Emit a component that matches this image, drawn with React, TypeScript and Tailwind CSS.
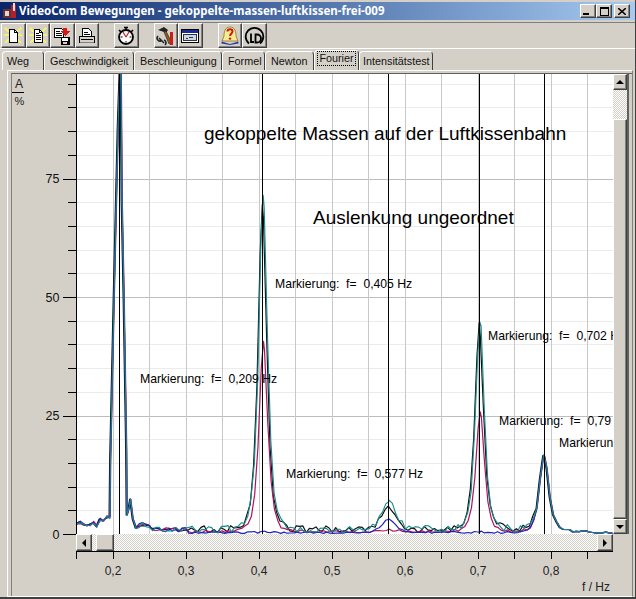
import type { ReactNode } from "react";

const W = 537;
const H = 460;
const px = (f: number) => (f - 0.15) * 730 + 1;
const py = (p: number) => H - p * 4.74;

const noiseA = (i: number) => Math.abs(Math.sin(i * 12.9898 + 4.1) * 43758.5453) % 1;
const noiseB = (i: number) => Math.abs(Math.sin(i * 78.233 + 1.7) * 24634.6345) % 1;

const bump = (f: number, c: number, h: number, w = 0.0107) => h / (1 + ((f - c) / w) ** 2) ** 2;

type Trace = { color: string; width: number; seed: number; p405: number; p577: number; p702: number; quiet: boolean; dx: number };

const traces: Trace[] = [
  { color: "#111111", width: 1.2, seed: 3, p405: 68, p577: 5.4, p702: 43, quiet: false, dx: -0.8 },
  { color: "#b01060", width: 1.2, seed: 11, p405: 40, p577: 0.5, p702: 25, quiet: false, dx: 0.3 },
  { color: "#2222bb", width: 1.2, seed: 19, p405: 0.2, p577: 2.9, p702: 0.2, quiet: true, dx: 0 },
  { color: "#158a8a", width: 1.1, seed: 27, p405: 71, p577: 6.4, p702: 44, quiet: false, dx: 0 },
];

// the big 0,209 Hz peak runs over the top, easier by hand in chart pixels
const bigPeak: [number, number][] = [
  [34, 430], [34.5, 385], [38, 226], [42, 56], [44, -4], [45, -4], [46, 126], [48, 226], [50.5, 376], [51, 441], [53, 434], [54.5, 425], [57, 445],
];

function tracePoints(t: Trace) {
  const pts: string[] = [];
  const step = 0.0045;
  const samples: number[] = [];
  for (let f = 0.15; f <= 0.885; f += step) samples.push(f);
  samples.push(0.405, 0.577, 0.702, 0.79);
  samples.sort((a, b) => a - b);
  let added = false;
  samples.forEach((f, i) => {
    if (f > 0.196 && f < 0.2295) {
      if (!added) {
        bigPeak.forEach(([x, y]) => pts.push(`${x + t.dx},${y}`));
        added = true;
      }
      return;
    }
    let v: number;
    if (f < 0.196) {
      v = 1.2 + (f > 0.18 ? (f - 0.18) * 90 : 0) + noiseA(i) * 1.4 + noiseB(i + t.seed) * 0.7;
    } else if (f < 0.3) {
      v = 0.4 + bump(f, 0.24, 1.2, 0.012) + noiseA(i + t.seed) * 1;
    } else if (t.quiet && f < 0.78) {
      v = 0.1 + noiseB(i + t.seed) * 0.4;
    } else if (f > 0.78) {
      v = Math.max(0.1, 0.9 - (f - 0.8) * 8) * (0.5 + noiseA(i) * 0.8);
    } else {
      v = 0.2 + noiseB(i + t.seed) * (t.color === "#158a8a" || t.color === "#111111" ? 1.5 : 0.6);
    }
    v += bump(f, 0.405, t.p405) + bump(f, 0.702, t.p702) + bump(f, 0.577, t.p577, 0.016);
    v += bump(f, 0.79, 15.8, 0.0115);
    pts.push(`${(px(f) + t.dx).toFixed(1)},${py(v).toFixed(1)}`);
  });
  return pts.join(" ");
}

const markers = [119, 262, 388, 479, 544];
const notes: [string, number, number][] = [
  ["Markierung:  f=  0,209 Hz", 140, 383],
  ["Markierung:  f=  0,405 Hz", 275, 288],
  ["Markierung:  f=  0,577 Hz", 286, 478],
  ["Markierung:  f=  0,702 Hz", 488, 340],
  ["Markierung:  f=  0,79", 499, 425],
  ["Markierun", 559, 447],
];

function Chart() {
  const minor = Array.from({ length: 21 }, (_, i) => i * 5);
  const vert = Array.from({ length: 15 }, (_, i) => Math.round(i * 36.5));
  return (
    <svg width={W} height={H} viewBox={`0 0 ${W} ${H}`} className="block bg-white" style={{ fontFamily: "'Liberation Sans', Arial, sans-serif" }}>
      <g shapeRendering="crispEdges">
        {minor.map((p) => (
          <line key={p} x1={0} x2={W} y1={Math.round(py(p)) + 0.5} y2={Math.round(py(p)) + 0.5} stroke={p % 25 === 0 ? "#bdbdbd" : "#ececec"} />
        ))}
        {vert.map((x) => (
          <line key={x} x1={x + 0.5} x2={x + 0.5} y1={0} y2={H} stroke="#c8c8c8" />
        ))}
      </g>
      {traces.map((t) => (
        <polyline key={t.color} points={tracePoints(t)} fill="none" stroke={t.color} strokeWidth={t.width} strokeLinejoin="round" />
      ))}
      <g shapeRendering="crispEdges">
        {markers.map((m) => (
          <line key={m} x1={m - 76 + 0.5} x2={m - 76 + 0.5} y1={0} y2={H} stroke="#000" />
        ))}
      </g>
      {notes.map(([s, x, y]) => (
        <text key={s} x={x - 76} y={y - 74} fontSize={12.2} fill="#000" xmlSpace="preserve">{s}</text>
      ))}
      <text x={204 - 76} y={140 - 74} fontSize={19} fill="#000">gekoppelte Massen auf der Luftkissenbahn</text>
      <text x={313 - 76} y={224 - 74} fontSize={19} fill="#000">Auslenkung ungeordnet</text>
      <line x1={0.5} x2={0.5} y1={0} y2={H} stroke="#000" shapeRendering="crispEdges" />
    </svg>
  );
}

function YAxis() {
  const ticks = Array.from({ length: 20 }, (_, i) => i * 5);
  return (
    <svg width={64} height={H} viewBox={`0 0 64 ${H}`} className="block overflow-visible" style={{ fontFamily: "'Liberation Sans', Arial, sans-serif" }}>
      <g shapeRendering="crispEdges">
        {ticks.map((p) => (
          <line key={p} x1={p % 25 === 0 ? 51 : 56} x2={64} y1={Math.round(py(p)) + 0.5} y2={Math.round(py(p)) + 0.5} stroke="#000" />
        ))}
        <line x1={0} x2={12} y1={18.5} y2={18.5} stroke="#000" />
      </g>
      <text x={3} y={14} fontSize={12} fill="#222">A</text>
      <text x={2.5} y={31} fontSize={11} fill="#222">%</text>
      {[25, 50, 75].map((p) => (
        <text key={p} x={47.5} y={py(p) + 4.5} fontSize={12.5} fill="#111" textAnchor="end">{p}</text>
      ))}
      <text x={47.5} y={H + 4.5} fontSize={12.5} fill="#111" textAnchor="end">0</text>
    </svg>
  );
}

function XAxis() {
  const ticks = Array.from({ length: 15 }, (_, i) => i);
  return (
    <svg width={W} height={42} viewBox={`0 0 ${W} 42`} className="block" style={{ fontFamily: "'Liberation Sans', Arial, sans-serif" }}>
      <g shapeRendering="crispEdges">
        <line x1={0} x2={W} y1={0.5} y2={0.5} stroke="#000" />
        {ticks.map((i) => (
          <line key={i} x1={Math.round(i * 36.5) + 0.5} x2={Math.round(i * 36.5) + 0.5} y1={0} y2={8} stroke="#000" />
        ))}
      </g>
      {["0,2", "0,3", "0,4", "0,5", "0,6", "0,7", "0,8"].map((s, i) => (
        <text key={s} x={37 + i * 73} y={24} fontSize={12} fill="#222" textAnchor="middle">{s}</text>
      ))}
      <text x={534} y={40} fontSize={12} fill="#222" textAnchor="end">f / Hz</text>
    </svg>
  );
}

function Sparkle() {
  return (
    <g stroke="#f4f070" strokeWidth={2}>
      <line x1={1} y1={1} x2={5} y2={5} />
      <line x1={17} y1={1} x2={13} y2={5} />
      <line x1={1} y1={16} x2={5} y2={12} />
      <line x1={17} y1={16} x2={13} y2={12} />
      <line x1={0} y1={8} x2={5} y2={8} />
      <line x1={18} y1={8} x2={13} y2={8} />
    </g>
  );
}

function Icon({ children }: { children: ReactNode }) {
  return (
    <svg width={18} height={18} viewBox="0 0 18 18" shapeRendering="crispEdges">
      {children}
    </svg>
  );
}

const docPath = "M5.5 2.5h5l3 3v10h-8z";

const icons: ReactNode[] = [
  <Icon key="new">
    <Sparkle />
    <path d={docPath} fill="#fff" stroke="#000" />
    <path d="M10.5 2.5v3h3" fill="none" stroke="#000" />
  </Icon>,
  <Icon key="open">
    <Sparkle />
    <path d={docPath} fill="#fff" stroke="#000" />
    <path d="M10.5 2.5v3h3M7 6.5h3M7 8.5h5M7 10.5h5M7 12.5h5" fill="none" stroke="#000" />
  </Icon>,
  <Icon key="save">
    <path d="M1.5 1.5h7l2 2v7h-9z" fill="#fff" stroke="#000" />
    <path d="M3 4.5h4M3 6.5h6M3 8.5h6" stroke="#000" />
    <path d="M8 1h4v3h3l-5 5-5-5h3z" transform="translate(2 0)" fill="#d81818" />
    <path d="M7.5 9.5h9v8h-9z" fill="#000" />
    <path d="M9 10.5h6v3H9z" fill="#fff" />
    <path d="M10 15h4v2h-4z" fill="#d4d0c8" />
  </Icon>,
  <Icon key="print">
    <path d="M4.5 1.5h6l3 3v5h-9z" fill="#fff" stroke="#000" />
    <path d="M6 5.5h4M6 7.5h6" stroke="#000" />
    <path d="M1.5 9.5h15v6h-15z" fill="#d4d0c8" stroke="#000" />
    <path d="M3 12.5h12" stroke="#000" />
    <path d="M2 15.5h14" stroke="#808080" />
  </Icon>,
];

const clock = (
  <svg width={20} height={20} viewBox="0 0 20 20">
    <path d="M8 1.5h4M10 1.5v2.5M3 4l2 2M17 4l-2 2" stroke="#000" strokeWidth={1.6} fill="none" />
    <circle cx={10} cy={11} r={7} fill="#fff" stroke="#000" strokeWidth={1.8} />
    <path d="M10 11L7 6M10 11l3-5" stroke="#c02020" strokeWidth={1.2} fill="none" />
    <path d="M4.5 11h2M13.5 11h2M10 15v1.5" stroke="#000" fill="none" />
  </svg>
);

const tools = (
  <svg width={20} height={20} viewBox="0 0 20 20">
    <path d="M2 4l6-3 4 3-2 3-2-1z" fill="#222" />
    <path d="M8 6l2-1 6 12-3 1z" fill="#8a5a20" stroke="#222" strokeWidth={0.6} />
    <path d="M14 6h3v13h-3z" fill="#cc1c1c" />
    <path d="M3 12l5 5M2 10a3 3 0 0 0 3 5M9 19a3 3 0 0 0-1-5" stroke="#222" strokeWidth={1.6} fill="none" />
  </svg>
);

const windowIcon = (
  <svg width={20} height={18} viewBox="0 0 20 18" shapeRendering="crispEdges">
    <path d="M1.5 2.5h17v13h-17z" fill="#fff" stroke="#000" />
    <path d="M2 3h16v3H2z" fill="#1a2a9a" />
    <path d="M3.5 7.5h13v6h-13z" fill="#c8d4e8" stroke="#333" />
    <path d="M6 11h2M9 11l2-1 2 1" stroke="#333" fill="none" />
  </svg>
);

const helpIcon = (
  <svg width={20} height={20} viewBox="0 0 20 20">
    <path d="M10 1c-5 0-6 5-6 9l-2 5h16l-2-5c0-4-1-9-6-9z" fill="#f8ec90" stroke="#806010" strokeWidth={0.7} />
    <path d="M7.5 5.5c0-3 5-3 5 0 0 2-2.4 2-2.4 4.5" fill="none" stroke="#d01818" strokeWidth={2} />
    <circle cx={10} cy={12.6} r={1.2} fill="#d01818" />
    <path d="M1.5 15.5l8.5 2.5 8.5-2.5v2l-8.5 1.5-8.5-1.5z" fill="#2a3aa8" />
  </svg>
);

const ldLogo = (
  <svg width={21} height={21} viewBox="0 0 21 21" fill="none" stroke="#000">
    <path d="M5 18.5A8.8 8.8 0 1 1 16 18.5" strokeWidth={1.8} />
    <path d="M7 8.5v8.5h3" strokeWidth={1.8} />
    <path d="M11.5 9.5h1.5a4 4 0 0 1 0 8h-1.5z" strokeWidth={1.8} />
  </svg>
);

function ToolButton({ children, ml }: { children: ReactNode; ml?: string }) {
  return (
    <div className={`flex h-[25px] w-[24.5px] items-center justify-center border border-b-[#404040] border-l-white border-r-[#404040] border-t-white bg-[#d4d0c8] shadow-[inset_-1px_-1px_0_#808080] ${ml ?? ""}`}>
      {children}
    </div>
  );
}

const tabs = [
  { label: "Weg", w: 42, pad: 4 },
  { label: "Geschwindigkeit", w: 90, pad: 5 },
  { label: "Beschleunigung", w: 88, pad: 5 },
  { label: "Formel", w: 43, pad: 5 },
  { label: "Newton", w: 49, pad: 5 },
  { label: "Fourier", w: 45, pad: 0, active: true },
  { label: "Intensitätstest", w: 74, pad: 3 },
];

const dither = "bg-[repeating-conic-gradient(#ffffff_0_25%,#d4d0c8_0_50%)] bg-[length:2px_2px]";
const raised = "border border-b-[#404040] border-l-white border-r-[#404040] border-t-white bg-[#d4d0c8] shadow-[inset_-1px_-1px_0_#808080]";

function Arrow({ dir }: { dir: "up" | "down" | "left" | "right" }) {
  const d = { up: "M4 0l4 4H0z", down: "M0 0h8L4 4z", left: "M4 0v8L0 4z", right: "M0 0l4 4-4 4z" }[dir];
  const vertical = dir === "up" || dir === "down";
  return (
    <svg width={vertical ? 8 : 4} height={vertical ? 4 : 8} viewBox={vertical ? "0 0 8 4" : "0 0 4 8"}>
      <path d={d} fill="#000" />
    </svg>
  );
}

export default function App() {
  return (
    <div className="flex h-[599px] w-[636px] flex-col overflow-hidden border-b-2 border-r border-b-[#404040] border-r-[#404040] bg-[#d4d0c8] pt-0.5 font-['Liberation_Sans',Arial,sans-serif]">
      <div className="flex h-[18px] shrink-0 items-center bg-gradient-to-r from-[#0a246a] to-[#a6caf0] pl-0.5 pr-[5px]">
        <svg width={16} height={16} viewBox="0 0 16 16" className="mr-[1px] shrink-0" shapeRendering="crispEdges">
          <path d="M1 6h8v9H1z" fill="#6a3030" />
          <path d="M3 8h4v5H3z" fill="#e0d8d0" />
          <path d="M9 2h5v13H9z" fill="#b02030" />
          <path d="M11 0h2v8h-2z" fill="#e8e0d8" />
        </svg>
        <span className="whitespace-nowrap font-['Noto_Sans',sans-serif] text-[11.5px] font-bold text-white">
          VideoCom Bewegungen - gekoppelte-massen-luftkissen-frei-009
        </span>
        <div className="ml-auto flex items-center">
          {["min", "max"].map((k) => (
            <div key={k} className={`flex h-[14px] w-4 items-end justify-center ${raised}`}>
              {k === "min" ? <div className="mb-0.5 h-0.5 w-1.5 -translate-x-0.5 bg-black" /> : <div className="mb-px h-[9px] w-[9px] border border-t-2 border-black" />}
            </div>
          ))}
          <div className={`ml-0.5 flex h-[14px] w-4 items-center justify-center ${raised}`}>
            <svg width={8} height={7} viewBox="0 0 8 7">
              <path d="M0 0l8 7M8 0L0 7" stroke="#000" strokeWidth={1.5} />
            </svg>
          </div>
        </div>
      </div>

      <div className="mt-0.5 flex h-[27px] shrink-0 items-center border-b border-t border-b-white border-t-[#808080] pl-px">
        {icons.map((ic, i) => (
          <ToolButton key={i}>{ic}</ToolButton>
        ))}
        <ToolButton ml="ml-[15px]">{clock}</ToolButton>
        <ToolButton ml="ml-[15px]">{tools}</ToolButton>
        <ToolButton>{windowIcon}</ToolButton>
        <ToolButton ml="ml-[15px]">{helpIcon}</ToolButton>
        <ToolButton>{ldLogo}</ToolButton>
      </div>

      <div className="flex h-[21px] shrink-0 items-end pl-0.5 pt-0.5 text-[10.8px] text-[#111]">
        {tabs.map((t) => (
          <div
            key={t.label}
            style={{ width: t.w, paddingLeft: t.pad }}
            className={`flex items-center rounded-t-sm border-r border-t border-l border-l-white border-r-[#404040] border-t-white ${t.active ? "h-[20px] justify-center pb-1" : "h-[19px]"}`}
          >
            <span className={t.active ? "border border-dotted border-black px-px leading-[13px]" : "leading-[14px]"}>{t.label}</span>
          </div>
        ))}
      </div>

      <div className="ml-[7px] mr-0.5 flex min-h-0 flex-1 flex-col border-b border-l border-r border-t border-b-white border-l-white border-r-[#808080] border-t-white pl-[3px] pt-[2px]">
        <div className="grid flex-1 grid-cols-[64px_537px_16px] grid-rows-[460px_17px_1fr] border-l border-t border-l-[#808080] border-t-[#606060]">
          <YAxis />
          <Chart />
          <div className="flex flex-col border-r-2 border-r-[#606060]">
            <div className={`flex h-4 shrink-0 items-center justify-center ${raised}`}>
              <Arrow dir="up" />
            </div>
            <div className={`h-[29px] shrink-0 ${dither}`} />
            <div className={`min-h-0 flex-1 ${raised}`} />
            <div className={`flex h-[15px] shrink-0 items-center justify-center ${raised}`}>
              <Arrow dir="down" />
            </div>
          </div>
          <div />
          <div className={`flex h-[17px] items-stretch ${dither}`}>
            <div className={`flex w-4 items-center justify-center ${raised}`}>
              <Arrow dir="left" />
            </div>
            <div className={`ml-1 w-[18px] ${raised}`} />
            <div className={`ml-auto flex w-4 items-center justify-center ${raised}`}>
              <Arrow dir="right" />
            </div>
          </div>
          <div />
          <div />
          <XAxis />
          <div />
        </div>
      </div>
    </div>
  );
}
